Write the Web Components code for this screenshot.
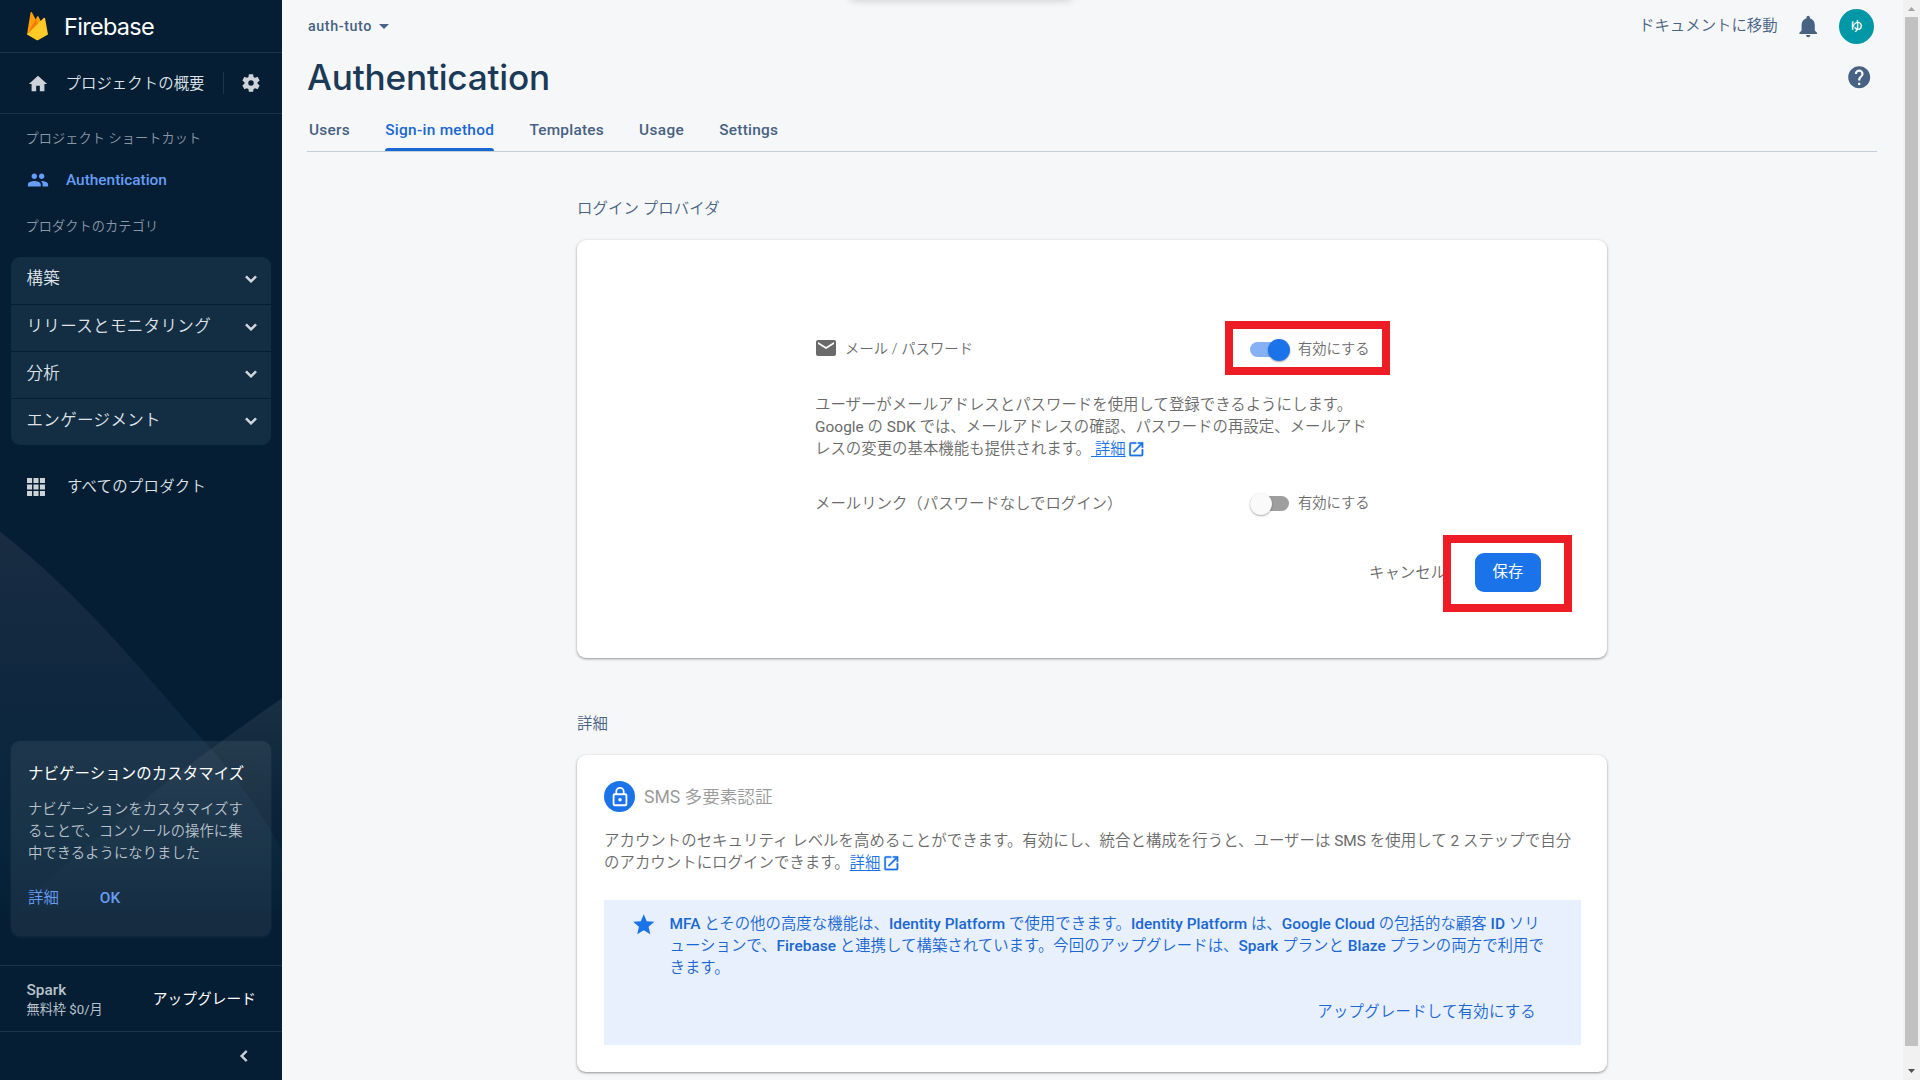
<!DOCTYPE html>
<html lang="ja">
<head>
<meta charset="utf-8">
<title>Authentication - Firebase console</title>
<style>
html,body{margin:0;height:100%;overflow:hidden}
body{font-family:Roboto,"Noto Sans CJK JP",sans-serif;font-size:15.4px;font-weight:350;line-height:22px;background:#f6f7f9;text-spacing-trim:space-all;white-space:nowrap}
</style>
</head>
<body>
<console-app></console-app>
<script>
const ICONS={
 home:'<path d="M10 20v-6h4v6h5v-8h3L12 3 2 12h3v8z"/>',
 gear:'<path d="M19.14 12.94c.04-.3.06-.61.06-.94s-.02-.64-.07-.94l2.03-1.58c.18-.14.23-.41.12-.61l-1.92-3.32c-.12-.22-.37-.29-.59-.22l-2.39.96c-.5-.38-1.03-.7-1.62-.94l-.36-2.54c-.04-.24-.24-.41-.48-.41h-3.84c-.24 0-.43.17-.47.41l-.36 2.54c-.59.24-1.13.57-1.62.94l-2.39-.96c-.22-.08-.47 0-.59.22L2.74 8.87c-.12.21-.08.47.12.61l2.03 1.58c-.05.3-.09.63-.09.94s.02.64.07.94l-2.03 1.58c-.18.14-.23.41-.12.61l1.92 3.32c.12.22.37.29.59.22l2.39-.96c.5.38 1.03.7 1.62.94l.36 2.54c.05.24.24.41.48.41h3.84c.24 0 .44-.17.47-.41l.36-2.54c.59-.24 1.13-.56 1.62-.94l2.39.96c.22.08.47 0 .59-.22l1.92-3.32c.12-.22.07-.47-.12-.61zM12 15a3 3 0 1 1 0-6 3 3 0 0 1 0 6z"/>',
 people:'<path d="M16 11c1.66 0 2.99-1.34 2.99-3S17.66 5 16 5s-3 1.34-3 3 1.34 3 3 3zm-8 0c1.66 0 2.99-1.34 2.99-3S9.66 5 8 5 5 6.34 5 8s1.34 3 3 3zm0 2c-2.33 0-7 1.17-7 3.5V19h14v-2.500C15 14.170 10.330 13 8 13zm8 0c-.29 0-.62.02-.97.05C16.190 13.890 17 15.020 17 16.500V19h6v-2.500c0-2.330-4.670-3.500-7-3.500z"/>',
 chevron:'<path d="M7.410 8.590 12 13.170l4.590-4.580L18 10l-6 6-6-6z" stroke="currentColor" stroke-width=".8"/>',
 left:'<path d="M15.410 7.410 14 6l-6 6 6 6 1.410-1.410L10.830 12z" stroke="currentColor" stroke-width=".8"/>',
 apps:'<path d="M2.200 2.200h5.500v5.500H2.200zM9.250 2.200h5.500v5.500h-5.500zM16.300 2.200h5.500v5.500h-5.500zM2.200 9.250h5.500v5.500H2.200zM9.250 9.250h5.500v5.500h-5.500zM16.300 9.250h5.500v5.500h-5.500zM2.200 16.300h5.500v5.500H2.200zM9.250 16.300h5.500v5.500h-5.500zM16.300 16.300h5.500v5.500h-5.500z"/>',
 caret:'<path d="m7 10 5 5 5-5z"/>',
 bell:'<path d="M12 22c1.100 0 2-.9 2-2h-4c0 1.100.9 2 2 2zm6-6v-5c0-3.070-1.640-5.640-4.500-6.320V4c0-.83-.67-1.500-1.500-1.500s-1.500.67-1.500 1.500v.68C7.630 5.360 6 7.920 6 11v5l-2 2v1h16v-1z"/>',
 help:'<path d="M12 2C6.480 2 2 6.480 2 12s4.480 10 10 10 10-4.480 10-10S17.520 2 12 2zm1 17h-2v-2h2zm2.070-7.750-.9.92C13.450 12.900 13 13.500 13 15h-2v-.5c0-1.100.45-2.100 1.170-2.830l1.240-1.260c.37-.36.59-.86.59-1.410a2 2 0 0 0-4 0H8a4 4 0 0 1 8 0c0 .88-.36 1.680-.93 2.250z"/>',
 mail:'<path d="M20 4H4a2 2 0 0 0-2 2v12a2 2 0 0 0 2 2h16a2 2 0 0 0 2-2V6a2 2 0 0 0-2-2zm0 4-8 5-8-5V6l8 5 8-5z"/>',
 open:'<path d="M19 19H5V5h7V3H5a2 2 0 0 0-2 2v14a2 2 0 0 0 2 2h14a2 2 0 0 0 2-2v-7h-2zM14 3v2h3.590l-9.830 9.830 1.410 1.410L19 6.410V10h2V3z" stroke="currentColor" stroke-width=".4"/>',
 lock:'<path d="M18 8h-1V6c0-2.760-2.240-5-5-5S7 3.240 7 6v2H6a2 2 0 0 0-2 2v10a2 2 0 0 0 2 2h12a2 2 0 0 0 2-2V10a2 2 0 0 0-2-2zM8.900 6a3.100 3.100 0 0 1 6.200 0v2H8.900zM18 20H6V10h12zm-6-3a2 2 0 1 0 0-4 2 2 0 0 0 0 4z"/>',
 star:'<path d="M12 17.270 18.180 21l-1.640-7.030L22 9.240l-7.190-.61L12 2 9.190 8.630 2 9.240l5.460 4.730L5.820 21z"/>'
};
function define(name,html,setup){
  const t=document.createElement('template');t.innerHTML=html;
  customElements.define(name,class extends HTMLElement{
    constructor(){super();this.attachShadow({mode:'open'}).append(t.content.cloneNode(true));}
    connectedCallback(){if(setup)setup(this,this.shadowRoot);}
  });
}
define('m-icon',`<style>:host{display:inline-block;flex:none;width:var(--s,22px);height:var(--s,22px)}svg{display:block;width:100%;height:100%;fill:currentColor}</style><svg viewBox="0 0 24 24"></svg>`,
 (h,r)=>{r.querySelector('svg').innerHTML=ICONS[h.getAttribute('name')]});
/* single-line text spread evenly over the width given in "w" */
define('fit-text',`<style>:host{display:inline-block;flex:none;white-space:nowrap}</style><span><slot></slot></span>`,
 (h,r)=>{const w=+h.getAttribute('w'),s=r.querySelector('span');
  const n=s.getBoundingClientRect().width,c=h.textContent.trim().length;
  h.style.letterSpacing=((w-n)/c)+'px';h.style.width=w+'px';});

define('nav-group',`<style>
:host{display:flex;box-sizing:border-box;height:47px;padding:0 9px 0 15.500px;align-items:center;justify-content:space-between;background:#132d43;border-bottom:1px solid #051e34;font-size:16.500px;letter-spacing:.35px;color:#dfe3e7}
:host([first]){height:48px;border-radius:9px 9px 0 0}:host([last]){height:46px;border-radius:0 0 9px 9px;border-bottom:0}
span{margin-top:-3px}:host([first]) span{margin-top:-4px}m-icon{--s:22px;color:#d3d8dc;margin-top:-2px}:host([first]) m-icon{margin-top:-3px}
</style><span><slot></slot></span><m-icon name="chevron"></m-icon>`);

define('tip-card',`<style>
:host{display:block;box-sizing:border-box;height:195px;margin:0 11px;padding:22px 17px 0;border-radius:9px;background:linear-gradient(#ffffff12,#ffffff10);box-shadow:0 1px 3px #ffffff12;color:#fff}
p{margin:13px 0 0;font-size:14.300px;color:#b9c2ca;letter-spacing:.07px}.a{display:flex;gap:41px;margin-top:23px;color:#669df6}
.a b{font-weight:500}
h4{margin:0;font-weight:400;font-size:15.400px;letter-spacing:.12px}
</style><h4>ナビゲーションのカスタマイズ</h4>
<p>ナビゲーションをカスタマイズす<br>ることで、コンソールの操作に集<br>中できるようになりました</p>
<div class="a"><span>詳細</span><b>OK</b></div>`);

define('side-nav',`<style>
:host{display:flex;flex-direction:column;width:282px;height:1080px;background:#051e34;position:relative;color:#dfe3e7;overflow:hidden}
.bg{position:absolute;left:0;top:0;width:282px;height:1080px}
.row{display:flex;align-items:center;position:relative}
.brand{height:52px;padding-left:26px;border-bottom:1px solid #1e3549;color:#fff}
.brand svg{width:22px;height:30px;margin-top:-1px}
.brand fit-text{margin:1px 0 0 16px;font:400 23.500px/30px Inter,Roboto,sans-serif}
.over{height:60px;padding-left:26.500px;border-bottom:1px solid #1e3549}
.over m-icon{margin-top:1px}
.over span{margin:2px 0 0 17px;flex:none;letter-spacing:.06px}.over i{width:1px;height:22px;background:#1e3549;margin-left:18px}.over .g{margin-left:16.500px;margin-top:-1px}
m-icon{color:#ced3d8}
h5{margin:0 0 0 25.500px;font-weight:350;font-size:13.200px;line-height:22px;letter-spacing:.08px;color:#8a98a5;position:relative}
.auth{height:24px;margin:18px 0 24px;padding-left:26.500px;color:#669df6;font-weight:500}
.auth m-icon{color:#669df6}.auth span{margin-left:17.500px}
.groups{margin:19px 11px 0;position:relative}
.all{margin-top:31px;height:22px;padding-left:25px}.all span{margin-left:20px;letter-spacing:.25px}
.sp{flex:1}
.plan{height:65px;margin-top:29px;border-top:1px solid #1e3549;padding:0 26px 0 26.500px;justify-content:space-between}
.plan b{font-weight:500;display:block;line-height:20px;color:#b9c2ca;margin-top:2px}.plan small{font-size:13.200px;font-weight:400;line-height:20px;display:block;color:#b9c2ca}
.plan .up{color:#fff;font-size:14.700px;font-weight:400;letter-spacing:.05px}
.fold{height:48px;border-top:1px solid #1e3549;justify-content:flex-end;padding-right:27px}
tip-card{position:relative}
</style>
<svg class="bg" viewBox="0 0 282 1080"><defs><linearGradient id="a" gradientUnits="userSpaceOnUse" x1="0" y1="531" x2="0" y2="925"><stop offset="0" stop-color="#192c42"/><stop offset=".5" stop-color="#0d273e"/><stop offset=".8" stop-color="#08243a"/><stop offset="1" stop-color="#051e34"/></linearGradient>
<linearGradient id="b" gradientUnits="userSpaceOnUse" x1="0" y1="698" x2="0" y2="920"><stop offset="0" stop-color="#fff" stop-opacity=".08"/><stop offset=".5" stop-color="#fff" stop-opacity=".025"/><stop offset="1" stop-color="#fff" stop-opacity="0"/></linearGradient></defs>
<path d="M0 531.500C85 598 150 681 210 748C245 787 265 820 282 850V940H0z" fill="url(#a)"/><path d="M282 698.500C215 744 120 815 20 905V940H282z" fill="url(#b)"/></svg>
<div class="row brand"><svg viewBox="0 0 22 30"><path d="M1 23.500 4.500 1.700c.1-.8 1.200-1 1.500-.3l3.700 7L11.100 5.600c.3-.6 1.100-.6 1.400 0L21 23z" fill="#ffa000"/><path d="m12.700 14-3-5.700L1 23.500z" fill="#f57c00"/><path d="M1 23.500 17.700 6.900c.5-.5 1.300-.2 1.400.5L22 23.500l-9.700 5.600c-.6.3-1.300.3-1.900 0z" fill="#ffca28"/></svg><fit-text w="90">Firebase</fit-text></div>
<div class="row over"><m-icon name="home"></m-icon><span>プロジェクトの概要</span><i></i><m-icon class="g" name="gear"></m-icon></div>
<h5 style="margin-top:14px">プロジェクト ショートカット</h5>
<div class="row auth"><m-icon name="people"></m-icon><span>Authentication</span></div>
<h5>プロダクトのカテゴリ</h5>
<div class="groups"><nav-group first>構築</nav-group><nav-group>リリースとモニタリング</nav-group><nav-group>分析</nav-group><nav-group last>エンゲージメント</nav-group></div>
<div class="row all"><m-icon name="apps"></m-icon><span>すべてのプロダクト</span></div>
<div class="sp"></div>
<tip-card></tip-card>
<div class="row plan"><div><b>Spark</b><small>無料枠 $0/月</small></div><span class="up">アップグレード</span></div>
<div class="row fold"><m-icon name="left"></m-icon></div>`);

define('top-bar',`<style>
:host{display:flex;align-items:center;height:52px;padding:0 29px 0 26px;color:#476282;box-sizing:border-box}
.p{font-weight:500;font-size:14.300px}
.c{--s:24px}.r{margin-left:auto}.bell{--s:26.400px;margin:0 18px 0 17px}
.av{width:35px;height:35px;border-radius:50%;background:#0097a7;color:#fff;font-size:12.500px;font-weight:500;line-height:35px;text-align:center;margin-top:1px}
</style><fit-text class="p" w="64">auth-tuto</fit-text><m-icon class="c" name="caret"></m-icon><span class="r">ドキュメントに移動</span><m-icon class="bell" name="bell"></m-icon><div class="av">ゆ</div>`);

define('page-head',`<style>
:host{display:block;margin:0 26px 0 25px;color:#476282}
.t{display:flex;align-items:center;justify-content:space-between;height:52px;padding:0 5px 0 0}
h1{margin:-3px 0 0;font:450 35.200px/48px Inter,Roboto,sans-serif;color:#1b3a57}
m-icon{--s:26.400px;margin-top:-2px}
nav{display:flex;height:47px;border-bottom:1px solid #c3d0dc;font-weight:500;gap:35.200px;padding-left:2px}
nav fit-text{line-height:52px;height:47px;box-sizing:border-box}
.on{color:#1967d2;position:relative}.on::after{content:"";position:absolute;left:0;right:0;bottom:0;height:3px;background:#1967d2;border-radius:3px 3px 0 0}
</style><div class="t"><h1><fit-text w="243">Authentication</fit-text></h1><m-icon name="help"></m-icon></div>
<nav><fit-text w="41">Users</fit-text><fit-text class="on" w="109">Sign-in method</fit-text><fit-text w="74.500">Templates</fit-text><fit-text w="45">Usage</fit-text><fit-text w="59">Settings</fit-text></nav>`);

define('toggle-switch',`<style>
:host{display:flex;align-items:center;gap:9px;font-size:14.300px;width:131px}
i{display:block;width:39px;height:15px;border-radius:8px;background:#9e9e9e;position:relative}
i::after{content:"";position:absolute;width:22px;height:22px;border-radius:50%;left:0;top:-3px;background:#fafafa;box-shadow:0 1px 2px #0005}
:host([on]) i{background:#86b1f4}:host([on]) i::after{left:18px;background:#1a73e8}
</style><i></i><span><slot></slot></span>`);

define('learn-link',`<style>:host{color:#1a73e8}u{text-decoration-thickness:1px;text-underline-offset:2px}m-icon{--s:18.500px;vertical-align:-4px;margin-left:1.500px}</style><u><slot></slot></u><m-icon name="open"></m-icon>`);
define('mark-box',`<style>:host{position:absolute;box-sizing:border-box;border:8px solid #ee1c24}</style>`);
define('white-card',`<style>:host{display:block;box-sizing:border-box;background:#fff;border-radius:9px;box-shadow:0 1px 2px #00000048,0 1px 3px 1px #0000001a;color:#6a6a6a;position:relative}</style><slot></slot>`);

define('provider-card',`<style>
:host{display:block}white-card{height:418px;padding:97px 35px 0 238px}
b{font-weight:400}
.r{display:flex;align-items:center;height:24px}.r toggle-switch{margin-left:auto;margin-right:191px}.r+.f{margin-top:37px}
.d+.r toggle-switch{margin-top:-2px}
.m{--s:24px;margin:-2px 7px 0 -1px}.d{margin:33px 0 32px;letter-spacing:.03px}
.f{display:flex;justify-content:flex-end;align-items:center;height:39px;margin-right:31px}
.s{width:66px;height:39px;border-radius:9px;background:#1a73e8;color:#fff;text-align:center;line-height:39px;font-weight:400;margin-left:29px}
.one{left:648px;top:81px;width:165px;height:54px}.two{left:866px;top:295px;width:129px;height:77px}
</style><white-card>
<div class="r"><m-icon class="m" name="mail"></m-icon><span style="font-size:14.300px;letter-spacing:.1px">メール / パスワード</span><toggle-switch on>有効にする</toggle-switch></div>
<div class="d">ユーザーがメールアドレスとパスワードを使用して登録できるようにします。<br><b>Google</b> の <b>SDK</b> では、メールアドレスの確認、パスワードの再設定、メールアド<br>レスの変更の基本機能も提供されます。<learn-link>&nbsp;詳細</learn-link></div>
<div class="r"><span>メールリンク（パスワードなしでログイン）</span><toggle-switch>有効にする</toggle-switch></div>
<div class="f"><span>キャンセル</span><div class="s">保存</div></div>
<mark-box class="one"></mark-box><mark-box class="two"></mark-box>
</white-card>`);

define('mfa-card',`<style>
:host{display:block}white-card{height:317px;padding:26px 26px 0 27px}
.h{display:flex;align-items:center;height:31px;font-size:17.600px;color:#9a9a9a}
.h b,.d b{font-weight:400}
.l{width:31px;height:31px;border-radius:50%;background:#1a73e8;color:#fff;display:grid;place-items:center;margin-right:9px}.l m-icon{--s:22px}
.d{margin:18px 0 26px;letter-spacing:.055px}
.b{box-sizing:border-box;height:145px;background:#e8f0fe;color:#1967d2;display:flex;padding:13px 36px 0 27px;letter-spacing:.04px}
.b b{font-weight:500}
.b m-icon{--s:25.500px;color:#1a73e8;margin-right:13px;margin-top:-1px}
.t{flex:1}.u{text-align:right;margin:22px 9px 0 0;letter-spacing:.25px}
</style><white-card>
<div class="h"><div class="l"><m-icon name="lock"></m-icon></div><span><b>SMS</b> 多要素認証</span></div>
<div class="d">アカウントのセキュリティ レベルを高めることができます。有効にし、統合と構成を行うと、ユーザーは <b>SMS</b> を使用して <b>2</b> ステップで自分<br>のアカウントにログインできます。<learn-link>詳細</learn-link></div>
<div class="b"><m-icon name="star"></m-icon><div class="t"><b>MFA</b> とその他の高度な機能は、<b>Identity Platform</b> で使用できます。<b>Identity Platform</b> は、<b>Google Cloud</b> の包括的な顧客 <b>ID</b> ソリ<br>ューションで、<b>Firebase</b> と連携して構築されています。今回のアップグレードは、<b>Spark</b> プランと <b>Blaze</b> プランの両方で利用で<br>きます。<div class="u">アップグレードして有効にする</div></div></div>
</white-card>`);

define('scroll-rail',`<style>
:host{display:flex;flex-direction:column;align-items:center;width:17px;height:1080px;background:#f1f1f1}
i{width:13px;height:1029px;background:#c1c1c1}svg{display:block;width:17px;height:17px}svg:last-child{margin-top:17px}
</style><svg viewBox="0 0 17 17"><path d="M5 11 8.500 7 12 11z" fill="#a3a3a3"/></svg><i></i><svg viewBox="0 0 17 17"><path d="M5 6 8.500 10 12 6z" fill="#505050"/></svg>`);

define('console-app',`<style>
:host{display:grid;grid-template-columns:282px 1fr 17px;height:1080px;overflow:hidden}
main{height:1080px;overflow:hidden;position:relative}
.c{width:1030px;margin:0 auto 0 295px}
h2{margin:0;font-weight:350;font-size:15.400px;line-height:22px;letter-spacing:.1px;color:#476282}
.sh{position:absolute;left:568px;top:-10px;width:222px;height:9px;border-radius:9px;box-shadow:0 1px 9px #0003}
</style><side-nav></side-nav><main><div class="sh"></div><top-bar></top-bar><page-head></page-head>
<div class="c"><h2 style="margin:46px 0 20px">ログイン プロバイダ</h2><provider-card></provider-card>
<h2 style="margin:55px 0 20px">詳細</h2><mfa-card></mfa-card></div></main><scroll-rail></scroll-rail>`);
</script>
</body>
</html>
